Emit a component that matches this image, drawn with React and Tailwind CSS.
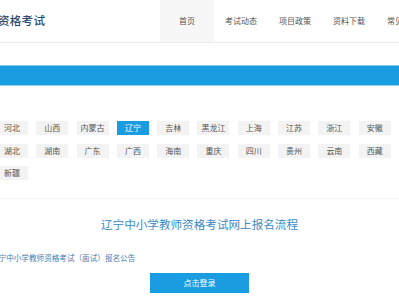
import React from 'react';

const navItems = ['首页', '考试动态', '项目政策', '资料下载', '常见问题'];

const provinces = [
  '河北', '山西', '内蒙古', '辽宁', '吉林', '黑龙江', '上海', '江苏', '浙江', '安徽',
  '湖北', '湖南', '广东', '广西', '海南', '重庆', '四川', '贵州', '云南', '西藏',
  '新疆',
];

export default function App() {
  return (
    <div
      className="w-[399px] h-[300px] overflow-hidden bg-white"
      style={{ fontFamily: '"Noto Sans CJK SC", "Noto Sans", sans-serif' }}
    >
      {/* header */}
      <div className="flex h-[43px] border-b border-[#ececec]">
        <div className="w-[160px] shrink-0 flex items-center">
          <span className="ml-[-2px] text-[11.5px] font-medium text-[#2b4c72] tracking-[0.3px]">资格考试</span>
        </div>
        {navItems.map((item, i) => (
          <div
            key={item}
            className={`w-[54px] shrink-0 flex items-center justify-center text-[8px] text-[#555] ${i === 0 ? 'bg-[#f7f7f7]' : ''}`}
          >
            {item}
          </div>
        ))}
      </div>

      {/* blue bar */}
      <div className="mt-[22px] h-[21px] bg-[#1a9de0] border-t border-t-[#7fd0f0] border-b border-b-[#8fd3f2]" />

      {/* provinces */}
      <div className="mt-[35px] ml-[-4px] grid grid-cols-[repeat(10,32px)] gap-x-[8.3px] gap-y-[8.5px]">
        {provinces.map((p) => (
          <div
            key={p}
            className={`h-[14px] flex items-center justify-center text-[8px] ${p === '辽宁' ? 'bg-[#1a9de0] text-white' : 'bg-[#f3f3f3] text-[#555]'}`}
          >
            {p}
          </div>
        ))}
      </div>

      <div className="mt-[18px] border-t border-[#f2f2f2]" />

      {/* content */}
      <div className="mt-[17px] text-center text-[11.6px] text-[#3a8bc6] leading-[16px]">
        辽宁中小学教师资格考试网上报名流程
      </div>
      <div className="mt-[20px] ml-[-9px] text-[7.6px] text-[#4a7db3] leading-[12px] whitespace-nowrap">
        辽宁中小学教师资格考试（面试）报名公告
      </div>
      <div className="mt-[9px] flex justify-center">
        <div className="w-[99px] h-[20px] bg-[#1a9de0] flex items-center justify-center text-white text-[8px]">
          点击登录
        </div>
      </div>
    </div>
  );
}
